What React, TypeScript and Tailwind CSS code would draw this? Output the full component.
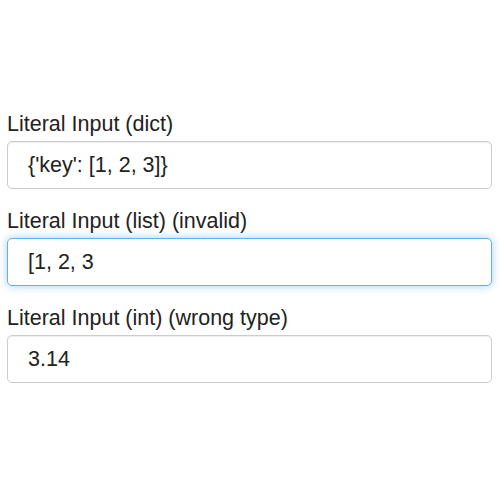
import React, { useState } from 'react';

type Field = {
  label: string;
  value: string;
  focused?: boolean;
};

const fields: Field[] = [
  { label: 'Literal Input (dict)', value: "{'key': [1, 2, 3]}" },
  { label: 'Literal Input (list) (invalid)', value: '[1, 2, 3', focused: true },
  { label: 'Literal Input (int) (wrong type)', value: '3.14' },
];

const LiteralField: React.FC<{ field: Field }> = ({ field }) => {
  const [value, setValue] = useState(field.value);

  const boxClass = field.focused
    ? 'border-[#66afe9] shadow-[0_0_8px_rgba(102,175,233,0.6)]'
    : 'border-[#cccccc] shadow-[inset_0_1px_1px_rgba(0,0,0,0.075)]';

  return (
    <div className="flex flex-col mb-[20px]">
      <label className="text-[21.5px] leading-[24px] text-[#222] mb-[5px]">{field.label}</label>
      <input
        className={`h-[48px] w-full rounded-[5px] border bg-white pl-[20px] pr-3 text-[21.5px] text-[#222] outline-none ${boxClass}`}
        value={value}
        onChange={(e) => setValue(e.target.value)}
      />
    </div>
  );
};

export default function App() {
  return (
    <div
      className="w-[500px] h-[500px] bg-white pt-[112px] pl-[7px] pr-[8px]"
      style={{ fontFamily: '"Liberation Sans", Arial, sans-serif' }}
    >
      {fields.map((f) => (
        <LiteralField key={f.label} field={f} />
      ))}
    </div>
  );
}
